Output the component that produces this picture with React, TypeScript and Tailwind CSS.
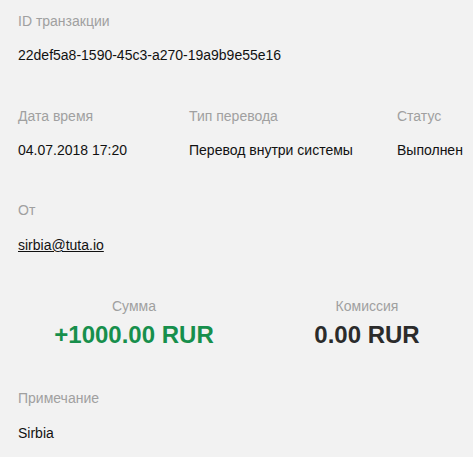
export default function App() {
  const label = "text-[14px] leading-5 text-[#a0a0a0]";
  const value = "text-[14px] leading-5 text-[#111111]";
  return (
    <div
      className="min-h-[457px] w-[473px] overflow-hidden bg-[#f2f2f2] pt-[11px]"
      style={{ fontFamily: '"Liberation Sans", Arial, sans-serif' }}
    >
      <div className="px-[18px]">
        <div className={label}>ID транзакции</div>
        <div className={`${value} mt-[14px]`}>22def5a8-1590-45c3-a270-19a9b9e55e16</div>
      </div>

      <div className="mt-[41px] flex px-[18px]">
        <div className="w-[171px] shrink-0">
          <div className={label}>Дата время</div>
          <div className={`${value} mt-[14px]`}>04.07.2018 17:20</div>
        </div>
        <div className="w-[208px] shrink-0">
          <div className={label}>Тип перевода</div>
          <div className={`${value} mt-[14px]`}>Перевод внутри системы</div>
        </div>
        <div className="shrink-0">
          <div className={label}>Статус</div>
          <div className={`${value} mt-[14px] whitespace-nowrap`}>Выполнен</div>
        </div>
      </div>

      <div className="mt-[40px] px-[18px]">
        <div className={label}>От</div>
        <div className={`${value} mt-[15px]`}>
          <span className="underline underline-offset-1">sirbia@tuta.io</span>
        </div>
      </div>

      <div className="mt-[41px] flex pl-[18px]">
        <div className="flex w-[232px] shrink-0 flex-col items-center">
          <div className={label}>Сумма</div>
          <div className="mt-[4px] text-[24px] font-bold leading-[30px] text-[#178f4c]">+1000.00 RUR</div>
        </div>
        <div className="flex w-[234px] shrink-0 flex-col items-center">
          <div className={label}>Комиссия</div>
          <div className="mt-[4px] text-[24px] font-bold leading-[30px] text-[#2b2b2b]">0.00 RUR</div>
        </div>
      </div>

      <div className="mt-[38px] px-[18px]">
        <div className={label}>Примечание</div>
        <div className={`${value} mt-[15px]`}>Sirbia</div>
      </div>
    </div>
  );
}
